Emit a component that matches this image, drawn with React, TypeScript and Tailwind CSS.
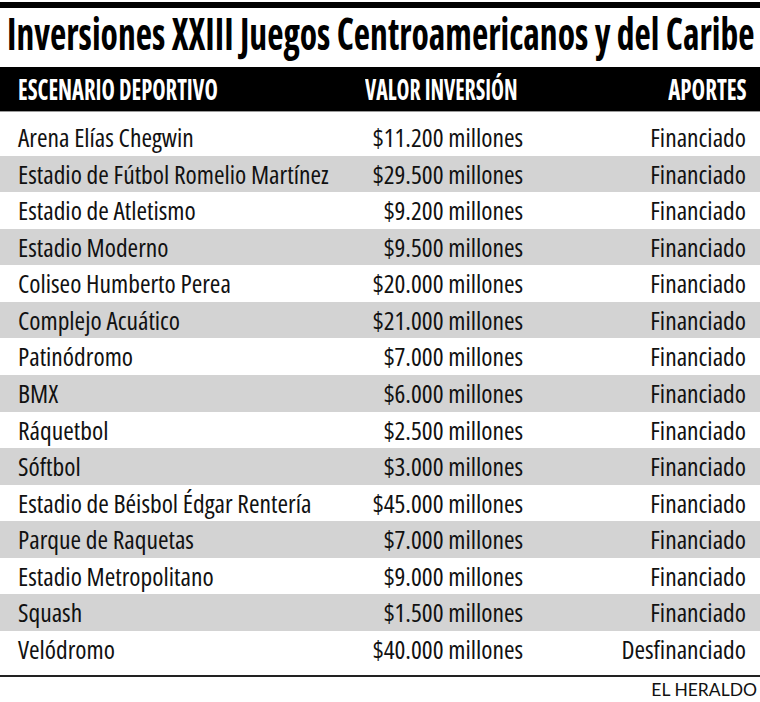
import React from "react";

const rows: [string, string, string][] = [
  ["Arena Elías Chegwin", "$11.200 millones", "Financiado"],
  ["Estadio de Fútbol Romelio Martínez", "$29.500 millones", "Financiado"],
  ["Estadio de Atletismo", "$9.200 millones", "Financiado"],
  ["Estadio Moderno", "$9.500 millones", "Financiado"],
  ["Coliseo Humberto Perea", "$20.000 millones", "Financiado"],
  ["Complejo Acuático", "$21.000 millones", "Financiado"],
  ["Patinódromo", "$7.000 millones", "Financiado"],
  ["BMX", "$6.000 millones", "Financiado"],
  ["Ráquetbol", "$2.500 millones", "Financiado"],
  ["Sóftbol", "$3.000 millones", "Financiado"],
  ["Estadio de Béisbol Édgar Rentería", "$45.000 millones", "Financiado"],
  ["Parque de Raquetas", "$7.000 millones", "Financiado"],
  ["Estadio Metropolitano", "$9.000 millones", "Financiado"],
  ["Squash", "$1.500 millones", "Financiado"],
  ["Velódromo", "$40.000 millones", "Desfinanciado"],
];

const cond = "font-['Open_Sans',sans-serif] [font-stretch:75%]";

export default function App() {
  return (
    <div className="w-[760px] h-[702px] overflow-hidden bg-white text-[#111]">
      <div className="mt-[2px] h-[6px] bg-black" />
      <div className={`h-[59px] pt-[3px] pl-[7px] whitespace-nowrap ${cond}`}>
        <span className="inline-block origin-left scale-x-[0.808] text-[44px] leading-[44px] font-bold text-black">
          Inversiones XXIII Juegos Centroamericanos y del Caribe
        </span>
      </div>
      <div className={`h-[44px] bg-black text-white flex pt-[8px] whitespace-nowrap ${cond} text-[28px] leading-[28px] font-bold`}>
        <div className="pl-[18px] w-[340px]">
          <span className="inline-block origin-left scale-x-[0.806]">ESCENARIO DEPORTIVO</span>
        </div>
        <div className="w-[178px] flex justify-end">
          <span className="inline-block origin-right scale-x-[0.78]">VALOR INVERSIÓN</span>
        </div>
        <div className="flex-1 flex justify-end pr-[13px]">
          <span className="inline-block origin-right scale-x-[0.82]">APORTES</span>
        </div>
      </div>
      <div className="h-px bg-[#9a9a9a]" />
      <div className={`pt-[7px] ${cond} text-[25.5px]`}>
        {rows.map((r, i) => (
          <div
            key={i}
            className={`flex h-[36.57px] leading-[36.57px] whitespace-nowrap ${i % 2 === 1 ? "bg-[#d3d3d3]" : "bg-white"}`}
          >
            <div className="pl-[18px] w-[340px]">{r[0]}</div>
            <div className="w-[183px] text-right">{r[1]}</div>
            <div className="flex-1 text-right pr-[14px]">{r[2]}</div>
          </div>
        ))}
      </div>
      <div className="mt-[8px] h-[2px] bg-[#222]" />
      <div className="flex justify-end pr-[3px] pt-[4px]">
        <span className="font-['Lato',sans-serif] text-[17.5px] leading-[18px]">EL HERALDO</span>
      </div>
    </div>
  );
}
